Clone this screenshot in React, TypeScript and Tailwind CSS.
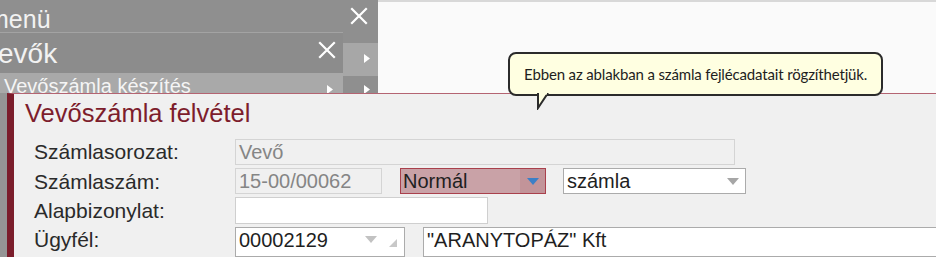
import React from "react";

const Arrow = ({ className = "" }: { className?: string }) => (
  <svg width="6" height="9" viewBox="0 0 6 9" className={className}>
    <path d="M0 0 L6 4.5 L0 9 Z" fill="#ffffff" />
  </svg>
);

const XIcon = ({ size = 18 }: { size?: number }) => (
  <svg width={size} height={size} viewBox="0 0 18 18">
    <path d="M2 2 L16 16 M16 2 L2 16" stroke="#ffffff" strokeWidth="2.2" strokeLinecap="square" />
  </svg>
);

const Tri = ({ color }: { color: string }) => (
  <svg width="12" height="7" viewBox="0 0 12 7">
    <path d="M0 0 L12 0 L6 7 Z" fill={color} />
  </svg>
);

export default function App() {
  const font = { fontFamily: '"Liberation Sans", Arial, sans-serif' };
  return (
    <div className="relative w-[936px] h-[257px] overflow-hidden bg-[#fafafa]" style={font}>
      {/* top shadow line on the white area */}
      <div className="absolute left-0 top-0 w-[936px] h-[2px] bg-[#d8d8d8]" />

      {/* menu windows (left) */}
      <div className="absolute left-0 top-0 w-[378px] h-[94px] bg-[#8f8f8f]">
        <div className="flex h-[32px] items-center justify-between pr-[10px]">
          <span className="ml-[-12px] mt-[6px] text-[25px] leading-none text-[#f2f2f2]">menü</span>
          <XIcon size={18} />
        </div>
        <div className="flex">
          <div className="w-[343px]">
            <div className="flex h-[41px] items-center justify-between border-t border-[#a3a3a3] bg-[#8c8c8c] pr-[7px]">
              <span className="ml-[-2px] mt-[2px] text-[28px] leading-none text-[#f2f2f2]">evők</span>
              <span className="mb-[6px]"><XIcon size={18} /></span>
            </div>
            <div className="flex h-[21px] items-start justify-between bg-[#a9a9a9] pr-[10px]">
              <span className="ml-[4px] mt-[3px] text-[20px] leading-none text-[#f5f5f5]">Vevőszámla készítés</span>
              <Arrow className="mt-[12px]" />
            </div>
          </div>
          <div className="flex w-[35px] flex-col">
            <div className="mt-[11px] flex h-[30px] items-center justify-end bg-[#a7a7a7] pr-[8px]">
              <Arrow />
            </div>
            <div className="flex h-[3px] bg-[#a7a7a7]" />
            <div className="ml-[10px] flex h-[18px] items-end justify-end bg-[#8f8f8f] pr-[8px]">
              <Arrow />
            </div>
          </div>
        </div>
      </div>

      {/* left strip under the form */}
      <div className="absolute left-0 top-[93px] w-[8px] h-[164px] bg-[#959595]" />

      {/* form window */}
      <div className="absolute left-[7px] top-[93px] w-[940px] h-[170px] border-t border-[#b46472] border-l-[7px] border-l-[#7b1d2b] bg-[#f0f0f0]">
        <div className="pl-[11px] pt-[7px] text-[25.5px] leading-none text-[#7d1d2c]">Vevőszámla felvétel</div>
        <div className="mt-[12px] flex flex-col gap-[3.5px] text-[20px] text-[#2a2a2a]">
          <div className="flex h-[26px] items-center">
            <div className="w-[221px] pl-[20px] text-[21px] leading-none">Számlasorozat:</div>
            <div className="flex h-[26px] w-[500px] items-center border border-[#d4d4d4] pl-[3px] leading-none text-[#858585]">Vevő</div>
          </div>
          <div className="flex h-[26px] items-center">
            <div className="w-[221px] pl-[20px] text-[21px] leading-none">Számlaszám:</div>
            <div className="flex h-[26px] w-[147px] items-center border border-[#d4d4d4] pl-[3px] leading-none text-[#858585]">15-00/00062</div>
            <div className="ml-[18px] flex h-[26px] w-[146px] items-center border border-[#a9404c] bg-[#c9a2a7]">
              <span className="flex-1 pl-[2px] leading-none text-[#1f1f1f]">Normál</span>
              <span className="flex h-full w-[25px] items-center justify-center bg-[#c29499]"><Tri color="#3c7fc6" /></span>
            </div>
            <div className="ml-[17px] flex h-[26px] w-[183px] items-center border border-[#ababab] bg-white">
              <span className="flex-1 pl-[3px] leading-none text-[#1f1f1f]">számla</span>
              <span className="mr-[6px]"><Tri color="#a6a6a6" /></span>
            </div>
          </div>
          <div className="flex h-[26px] items-center">
            <div className="w-[221px] pl-[20px] text-[21px] leading-none">Alapbizonylat:</div>
            <div className="h-[27px] w-[253px] border border-[#cfcfcf] bg-white" />
          </div>
          <div className="flex h-[26px] items-start">
            <div className="w-[221px] pl-[20px] pt-[2px] text-[21px] leading-none">Ügyfél:</div>
            <div className="flex h-[30px] w-[170px] items-start border border-[#ababab] bg-white">
              <span className="flex-1 pl-[3px] pt-[2px] leading-none text-[#1f1f1f]">00002129</span>
              <span className="mt-[8px] mr-[12px]"><Tri color="#c2c2c2" /></span>
              <svg width="8" height="8" viewBox="0 0 8 8" className="mt-[11px] mr-[7px]">
                <path d="M8 0 L8 8 L0 8 Z" fill="#c8c8c8" />
              </svg>
            </div>
            <div className="ml-[18px] flex h-[30px] w-[520px] items-start border border-[#ababab] bg-white">
              <span className="pl-[3px] pt-[2px] leading-none text-[#1f1f1f]">"ARANYTOPÁZ" Kft</span>
            </div>
          </div>
        </div>
      </div>

      {/* tooltip */}
      <div className="absolute left-[508px] top-[52px]">
        <div className="relative flex h-[44px] w-[375px] items-center rounded-[8px] border-2 border-[#2b2b2b] bg-[#ffffe1] pl-[14px] text-[15px] tracking-[-0.15px] text-[#1e1e1e]" style={{ fontFamily: 'Lato, "Liberation Sans", sans-serif' }}>
          Ebben az ablakban a számla fejlécadatait rögzíthetjük.
        </div>
        <svg width="16" height="17" viewBox="0 0 16 17" className="absolute left-[28px] top-[41px]">
          <path d="M2 0 L2 15 L12 0" fill="#ffffe1" stroke="#2b2b2b" strokeWidth="2" />
          <path d="M3 0 L11 0" stroke="#ffffe1" strokeWidth="3" />
        </svg>
      </div>
    </div>
  );
}
